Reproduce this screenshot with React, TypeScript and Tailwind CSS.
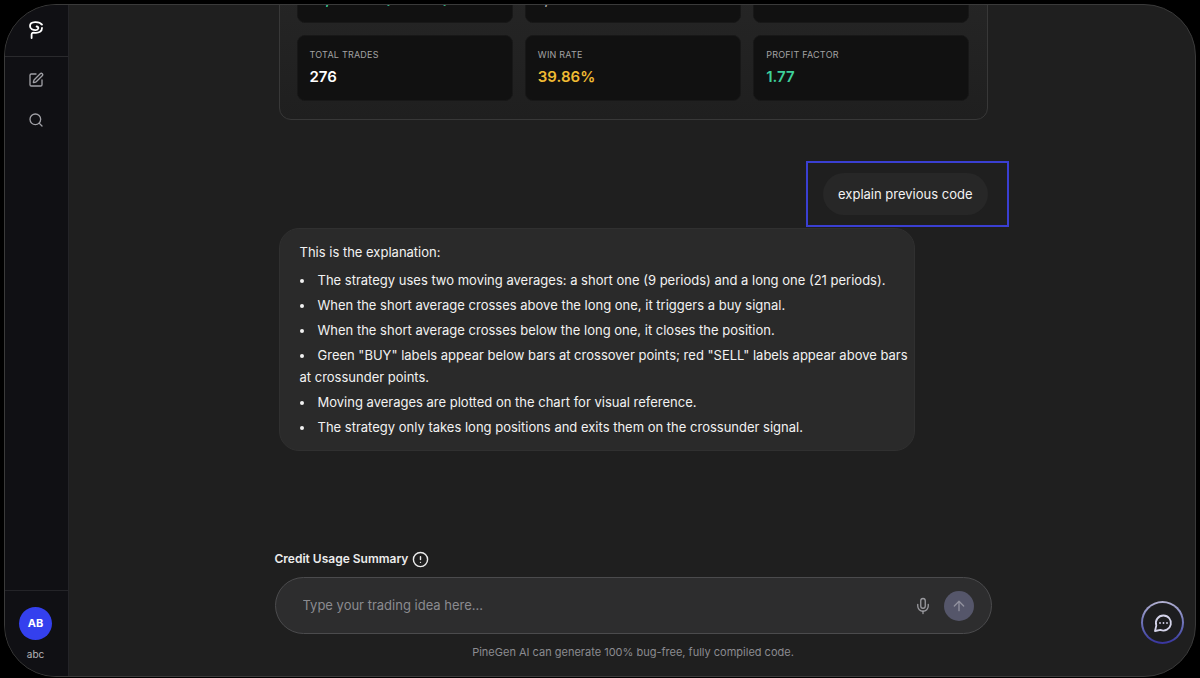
import { useState } from 'react';
import { ArrowUp, CircleAlert, Mic, Search, SquarePen } from 'lucide-react';

const stats = [
  { label: 'Net Profit', value: '10,770.00 (10.77%)', color: 'text-[#3ecf9b]' },
  { label: 'Final Equity', value: '1,077.00', color: 'text-neutral-400' },
  { label: 'Max Drawdown', value: '12.48%', color: 'text-white' },
  { label: 'Total Trades', value: '276', color: 'text-white' },
  { label: 'Win Rate', value: '39.86%', color: 'text-[#f0bb33]' },
  { label: 'Profit Factor', value: '1.77', color: 'text-[#3ecf9b]' },
];

const points = [
  'The strategy uses two moving averages: a short one (9 periods) and a long one (21 periods).',
  'When the short average crosses above the long one, it triggers a buy signal.',
  'When the short average crosses below the long one, it closes the position.',
  'Green "BUY" labels appear below bars at crossover points; red "SELL" labels appear above bars at crossunder points.',
  'Moving averages are plotted on the chart for visual reference.',
  'The strategy only takes long positions and exits them on the crossunder signal.',
];

function Logo() {
  return (
    <svg viewBox="0 0 16 20" className="h-5 w-4" fill="none" stroke="currentColor" strokeWidth="1.8" strokeLinecap="round" strokeLinejoin="round">
      <path d="M14 4.600C11.500 1.200 2 .8 2 6c0 3 3 4.300 5.800 4.200 2.800-.1 3.600-3.600.8-3.700" />
      <path d="M3.600 18v-3.500C3.600 12.800 5 12.600 7 12.800c4 .3 7-1.300 7-4.800" />
    </svg>
  );
}

function Sidebar() {
  return (
    <aside className="flex w-16 shrink-0 flex-col border-r border-[#242428] bg-[#101014]">
      <div className="flex h-[52px] items-center justify-center border-b border-[#2a2a2d] pr-0.5 pb-0.5 text-white">
        <Logo />
      </div>
      <nav className="flex flex-1 flex-col items-center gap-6 pt-[15px] pr-0.5 text-[#a0a0a6]">
        <button type="button" aria-label="New chat"><SquarePen size={16} /></button>
        <button type="button" aria-label="Search"><Search size={16} /></button>
      </nav>
      <div className="flex h-[86px] flex-col items-center gap-1.5 border-t border-[#242428] pt-4 pr-0.5">
        <div className="flex size-[33px] items-center justify-center rounded-full bg-[#3440ee] text-[11px] font-bold text-white">AB</div>
        <span className="text-[10px] leading-4 text-[#b4b4b8]">abc</span>
      </div>
    </aside>
  );
}

function Results() {
  return (
    <section className="shrink-0 rounded-xl border border-[#383838] bg-linear-to-b from-[#272727] to-[#1f1f1f] px-[17px] pb-[18px]">
      <div className="grid grid-cols-3 gap-3">
        {stats.map((s) => (
          <div key={s.label} className="h-[66px] rounded-lg border border-[#181818] bg-[#111111] px-3 py-[11px]">
            <div className="text-[9px] leading-4 tracking-wide text-[#a3a3a3] uppercase">{s.label}</div>
            <div className={`mt-1 text-[15px] leading-5 font-semibold ${s.color}`}>{s.value}</div>
          </div>
        ))}
      </div>
    </section>
  );
}

function Composer() {
  const [idea, setIdea] = useState('');

  return (
    <div className="mx-auto w-full max-w-[717px] shrink-0 pb-4">
      <div className="flex h-5 items-center gap-1 text-xs font-semibold text-[#ececec]">
        Credit Usage Summary
        <CircleAlert size={17} />
      </div>
      <form
        onSubmit={(e) => e.preventDefault()}
        className="mt-2 flex h-[57px] items-center rounded-full border border-[#4b4b4d] bg-[#2d2d2e] pr-[17px] pl-[27px]"
      >
        <input
          value={idea}
          onChange={(e) => setIdea(e.target.value)}
          aria-label="Trading idea"
          placeholder="Type your trading idea here..."
          className="min-w-0 flex-1 bg-transparent text-[13px] text-white outline-none placeholder:text-[#8b8b90]"
        />
        <button type="button" aria-label="Dictate" className="mr-3 text-[#9a9a9f]"><Mic size={18} strokeWidth={1.75} /></button>
        <button type="submit" aria-label="Send" className="flex size-[30px] items-center justify-center rounded-full bg-[#55566a] text-[#92929f]">
          <ArrowUp size={16} />
        </button>
      </form>
      <p className="mt-2.5 text-center text-[11px] leading-4 text-[#8b8b90]">PineGen AI can generate 100% bug-free, fully compiled code.</p>
    </div>
  );
}

export default function App() {
  return (
    <div className="h-screen bg-black px-1 pt-1 pb-px font-['Inter',sans-serif]">
      <div className="relative flex h-full overflow-hidden rounded-[52px] border border-[#3a3a3a] bg-[#1f1f1f]">
        <Sidebar />
        <main className="flex min-w-0 flex-1 flex-col pl-0.5">
          <div className="flex min-h-0 flex-1 flex-col justify-end overflow-hidden pb-[98px]">
            <div className="mx-auto flex w-full max-w-[709px] flex-col">
              <Results />
              <div className="relative mt-[53px] self-end rounded-full bg-[#272727] px-[15px] py-2.5 text-[13px] leading-[22px] text-[#f2f2f2]">
                explain previous code
                <div className="pointer-events-none absolute -inset-y-3 -right-[21px] -left-[17px] z-10 border-2 border-[#3a3fd2]" />
              </div>
              <div className="mt-[13px] w-full max-w-[636px] rounded-[20px] border border-[#303030] bg-[#2a2a2a] py-3 pr-0.5 pl-5 text-[13px] leading-[22px] text-[#f2f2f2]">
                <p>This is the explanation:</p>
                <ul className="mt-1.5 list-inside list-disc space-y-[3px]">
                  {points.map((p) => (
                    <li key={p}>{p}</li>
                  ))}
                </ul>
              </div>
            </div>
          </div>
          <Composer />
        </main>
        <button
          type="button"
          aria-label="Open chat"
          className="absolute right-[11px] bottom-8 size-[43px] rounded-full bg-linear-to-b from-[#b4b2d2] to-[#37329c] p-0.5"
        >
          <span className="flex size-full items-center justify-center rounded-full bg-[#1d1d1f] text-[#d4d3ea]">
            <svg viewBox="0 0 20 20" className="size-5" fill="none" stroke="currentColor" strokeWidth="1.8" strokeLinejoin="round">
              <path d="M10.5 2.5a7.5 7.5 0 1 1-3 14.4L2 18l1.300-5.500A7.5 7.5 0 0 1 10.500 2.500Z" />
              <path d="M7 10h.01M10.500 10h.01M14 10h.01" strokeLinecap="round" />
            </svg>
          </span>
        </button>
      </div>
    </div>
  );
}
